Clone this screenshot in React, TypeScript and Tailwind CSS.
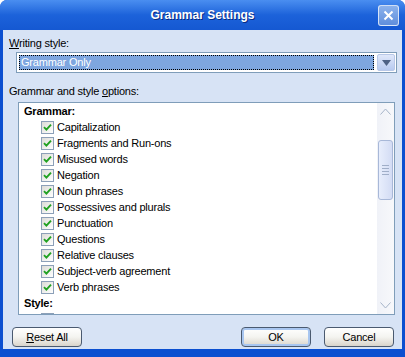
import React from "react";

const grammarItems = [
  "Capitalization",
  "Fragments and Run-ons",
  "Misused words",
  "Negation",
  "Noun phrases",
  "Possessives and plurals",
  "Punctuation",
  "Questions",
  "Relative clauses",
  "Subject-verb agreement",
  "Verb phrases",
];

const font = { fontFamily: '"Liberation Sans", Arial, sans-serif' };

function CheckBox({ checked = true }: { checked?: boolean }) {
  return (
    <span className="w-[13px] h-[13px] shrink-0 border border-[#8ca0b8] bg-gradient-to-br from-[#dcdcd7] to-[#ffffff] flex items-center justify-center">
      {checked && (
        <svg width="9" height="9" viewBox="0 0 9 9">
          <path d="M1 4.2 L3.4 6.6 L8 1.6" fill="none" stroke="#21a121" strokeWidth="1.9" />
        </svg>
      )}
    </span>
  );
}

function XpButton({ children, focused }: { children: React.ReactNode; focused?: boolean }) {
  return (
    <button
      className={`h-[20px] w-[70px] rounded-[4px] border border-[#4a5a70] bg-gradient-to-b from-[#ffffff] via-[#f4f4f0] to-[#d9d4cb] text-[11px] tracking-[-0.2px] text-black flex items-center justify-center ${
        focused ? "shadow-[inset_0_0_0_2px_#a8c6f0]" : ""
      }`}
    >
      {children}
    </button>
  );
}

export default function App() {
  return (
    <div className="w-[405px] h-[357px] flex flex-col bg-[#0b4fd0] rounded-t-[7px] overflow-hidden" style={font}>
      {/* title bar */}
      <div className="h-[30px] shrink-0 relative flex items-center justify-center bg-gradient-to-b from-[#4a8ef0] via-[#1c62da] to-[#1558d2]">
        <span className="text-white font-bold text-[12px] [text-shadow:1px_1px_0_#0a2a80]">Grammar Settings</span>
        <div className="absolute right-[6px] top-[5px] w-[21px] h-[21px] rounded-[3px] border border-white/70 bg-gradient-to-b from-[#8cb2ec] to-[#5f8edc] flex items-center justify-center">
          <svg width="11" height="11" viewBox="0 0 11 11">
            <path d="M1.5 1.5 L9.5 9.5 M9.5 1.5 L1.5 9.5" stroke="#ffffff" strokeWidth="2" />
          </svg>
        </div>
      </div>

      {/* body */}
      <div className="flex-1 mx-[3px] mb-[8px] bg-[#d7e3f5] flex flex-col text-[11px] tracking-[-0.2px] text-black">
        <div className="pt-[6px] pl-[6px] leading-[14px]">
          <span className="underline">W</span>riting style:
        </div>
        <div className="mt-[2px] ml-[13px] mr-[5px] h-[21px] bg-white border border-[#7f9db9] flex items-center pl-[2px] pr-[1px]">
          <div className="flex-1 h-[15px] bg-[#7ea6df] border border-dotted border-black text-white flex items-center pl-[1px] leading-none">
            Grammar Only
          </div>
          <div className="ml-[3px] w-[18px] h-[17px] rounded-[2px] border border-[#b8c8e8] bg-gradient-to-b from-[#e0e8fa] to-[#b7caf0] flex items-center justify-center">
            <svg width="9" height="6" viewBox="0 0 9 6">
              <path d="M0 0 L9 0 L4.5 6 Z" fill="#4d6185" />
            </svg>
          </div>
        </div>

        <div className="mt-[11px] pl-[6px] leading-[14px]">
          Grammar and style <span className="underline">o</span>ptions:
        </div>

        <div className="mt-[4px] ml-[15px] mr-[7px] h-[213px] shrink-0 bg-white border border-[#7f9db9] flex overflow-hidden">
          <div className="flex-1 pl-[5px] overflow-hidden">
            <div className="font-bold h-[16px] flex items-center">Grammar:</div>
            {grammarItems.map((item) => (
              <div key={item} className="h-[16px] flex items-center gap-[3px] pl-[17px]">
                <CheckBox />
                <span>{item}</span>
              </div>
            ))}
            <div className="font-bold h-[16px] flex items-center">Style:</div>
            <div className="h-[16px] flex items-center pl-[17px]">
              <CheckBox checked={false} />
            </div>
          </div>
          <div className="w-[17px] bg-gradient-to-r from-[#f0f2f8] to-[#f7f8fb] flex flex-col items-center">
            <div className="h-[17px] w-full flex items-center justify-center">
              <svg width="11" height="7" viewBox="0 0 11 7">
                <path d="M0.5 6.5 L5.5 1 L10.5 6.5" fill="none" stroke="#a6b4c8" />
              </svg>
            </div>
            <div className="mt-[20px] h-[60px] w-[15px] rounded-[3px] border border-[#a8b8d8] bg-gradient-to-r from-[#e8eefc] to-[#d3dcf4] flex flex-col items-center justify-center gap-[2px]">
              <div className="w-[7px] h-px bg-[#a0aec8]" />
              <div className="w-[7px] h-px bg-[#a0aec8]" />
              <div className="w-[7px] h-px bg-[#a0aec8]" />
              <div className="w-[7px] h-px bg-[#a0aec8]" />
            </div>
            <div className="flex-1" />
            <div className="h-[17px] w-full flex items-center justify-center">
              <svg width="11" height="7" viewBox="0 0 11 7">
                <path d="M0.5 0.5 L5.5 6 L10.5 0.5" fill="none" stroke="#a6b4c8" />
              </svg>
            </div>
          </div>
        </div>

        <div className="mt-[12px] pl-[9px] pr-[8px] flex items-center">
          <XpButton>
            <span className="underline">R</span>eset All
          </XpButton>
          <div className="flex-1" />
          <XpButton focused>OK</XpButton>
          <div className="w-[13px]" />
          <XpButton>Cancel</XpButton>
        </div>
      </div>
    </div>
  );
}
